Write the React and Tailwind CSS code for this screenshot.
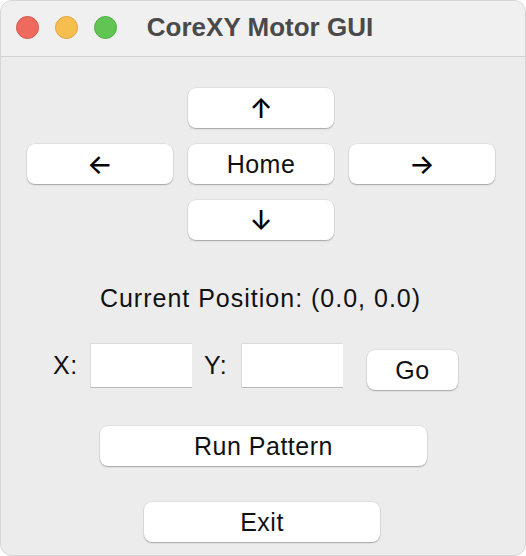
import React from 'react'

const btn =
  'flex items-center justify-center bg-white rounded-[8px] shadow-[0_1px_1.5px_rgba(0,0,0,0.28),0_0_0_0.5px_rgba(0,0,0,0.08)] text-[#111] text-[25px] leading-none tracking-[0.5px]'

const arrow = 'font-["Inter",sans-serif] text-[27px] font-medium leading-none tracking-normal text-black'

function Light({ color, border }) {
  return <span className={`block w-[23px] h-[23px] rounded-full border ${color} ${border}`} />
}

export default function App() {
  return (
    <div className="w-[526px] h-[556px] bg-white">
      <div className='w-[526px] h-[556px] rounded-[12px] overflow-hidden border border-[#d6d6d6] bg-[#ececec] flex flex-col font-["Liberation_Sans",Arial,sans-serif]'>
        {/* Title bar */}
        <div className="h-[56px] shrink-0 bg-[#f0f0f0] border-b border-[#d2d2d2] relative flex items-center justify-center">
          <div className="absolute left-[15px] top-[15px] flex gap-[16px]">
            <Light color="bg-[#ee6a5f]" border="border-[#d6564c]" />
            <Light color="bg-[#f6be4f]" border="border-[#dca43c]" />
            <Light color="bg-[#61c554]" border="border-[#4fae43]" />
          </div>
          <span className="text-[26px] font-bold text-[#4a4a4a] ml-[-6px] mt-[-2px]">CoreXY Motor GUI</span>
        </div>

        {/* Body */}
        <div className="flex flex-col pt-[31px]">
          {/* Direction pad */}
          <div className="grid grid-cols-[146px_146px_146px] gap-x-[15px] gap-y-[16px] pl-[26px]">
            <div />
            <button className={`${btn} h-[40px]`}><span className={arrow}>↑</span></button>
            <div />
            <button className={`${btn} h-[40px]`}><span className={arrow}>←</span></button>
            <button className={`${btn} h-[40px]`}>Home</button>
            <button className={`${btn} h-[40px]`}><span className={arrow}>→</span></button>
            <div />
            <button className={`${btn} h-[40px]`}><span className={arrow}>↓</span></button>
            <div />
          </div>

          {/* Position */}
          <p className="mt-[43px] text-center text-[25px] leading-[30px] tracking-[1px] text-[#111] pr-[5px]">
            Current Position: (0.0, 0.0)
          </p>

          {/* Coordinates */}
          <div className="mt-[30px] flex items-start pl-[52px] text-[25px] text-[#111] tracking-[0.5px]">
            <span className="w-[24px] h-[45px] flex items-center">X:</span>
            <input
              type="text"
              className="ml-[13px] w-[102px] h-[45px] bg-white border-t border-l border-[#dcdcdc] border-b-[1.5px] border-b-[#b9b9b9] outline-none"
            />
            <span className="ml-[12px] w-[24px] h-[45px] flex items-center">Y:</span>
            <input
              type="text"
              className="ml-[13px] w-[102px] h-[45px] bg-white border-t border-l border-[#dcdcdc] border-b-[1.5px] border-b-[#b9b9b9] outline-none"
            />
            <button className={`${btn} ml-[24px] mt-[7px] w-[91px] h-[40px]`}>Go</button>
          </div>

          {/* Actions */}
          <button className={`${btn} mt-[36px] self-center ml-[1px] w-[327px] h-[40px]`}>Run Pattern</button>
          <button className={`${btn} mt-[36px] self-center ml-[-2px] w-[236px] h-[40px]`}>Exit</button>
        </div>
      </div>
    </div>
  )
}
